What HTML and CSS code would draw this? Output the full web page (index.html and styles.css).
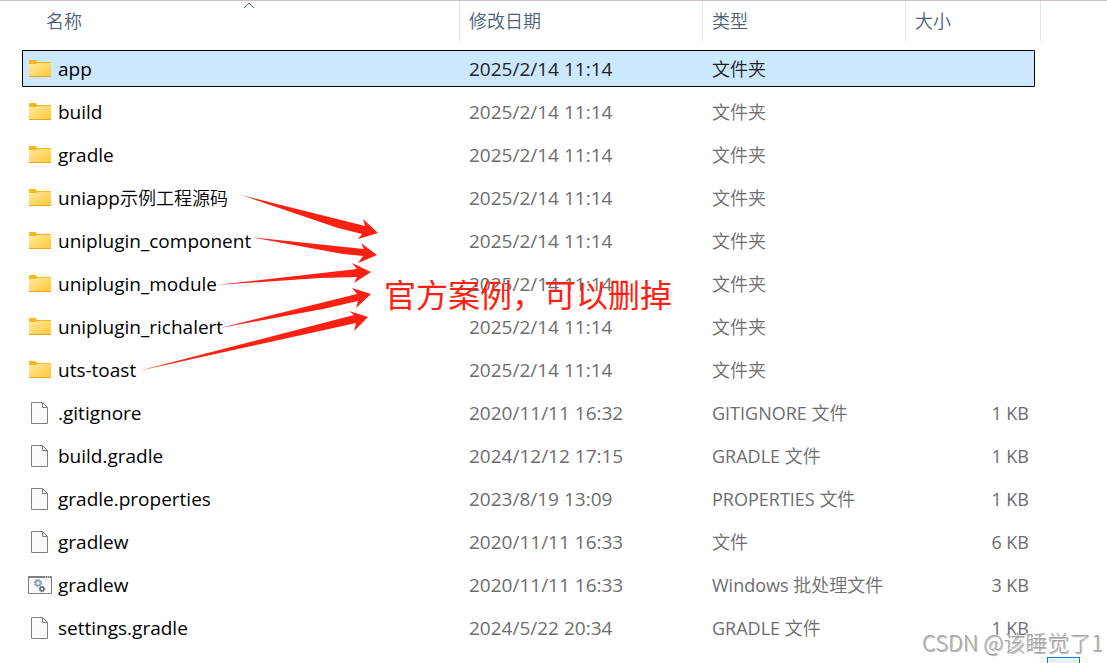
FILE: index.html
```
<!DOCTYPE html>
<html lang="zh-CN">
<head>
    <meta charset="UTF-8">
    <meta name="viewport" content="width=device-width, initial-scale=1.0">
    <title>文件夹</title>
    <link rel="stylesheet" href="styles.css">
</head>
<body>

<!-- Shared icons -->
<svg class="sprite" aria-hidden="true">
    <defs>
        <linearGradient id="folderFill" x1="0" y1="0" x2="1" y2="1">
            <stop offset="0" stop-color="#ffe8a0"/>
            <stop offset="1" stop-color="#ffc933"/>
        </linearGradient>
    </defs>
    <symbol id="folder" viewBox="0 0 24 24">
        <path d="M1 5V4q0-1 1-1h5q1 0 1.500 1l.5 1h13q1 0 1 1v2H1z" fill="#f8b81c"/>
        <path d="M1 7h7l1.500-1H23v14H1z" fill="url(#folderFill)"/>
        <path d="M1 19h22v1H1z" fill="#e8a91f"/>
    </symbol>
    <symbol id="file" viewBox="0 0 24 24">
        <path d="M3.500 1.500h11l5 5v16h-16z" fill="#fafafa" stroke="#808080"/>
        <path d="M14.500 1.500v5h5z" fill="#fff" stroke="#808080"/>
    </symbol>
    <symbol id="batch" viewBox="0 0 24 24">
        <path d="M.5 3.500h23v17H.5z" fill="#fafafa" stroke="#808080"/>
        <path d="M0 3h24v2H0z" fill="#808080"/>
        <path d="M17 4h1M19 4h1M21 4h1" stroke="#fff"/>
        <circle cx="10" cy="10" r="2.500" fill="none" stroke="#9aa7b2" stroke-width="2"/>
        <circle cx="10" cy="10" r="3.700" fill="none" stroke="#9aa7b2" stroke-width="1.200" stroke-dasharray="1.450 1.450"/>
        <circle cx="14" cy="16" r="1.900" fill="none" stroke="#5f6d78" stroke-width="1.500"/>
        <circle cx="14" cy="16" r="2.800" fill="none" stroke="#5f6d78" stroke-width="1" stroke-dasharray="1.100 1.100"/>
    </symbol>
</svg>

<main class="explorer">
    <table class="files">
        <colgroup>
            <col>
            <col class="col-date">
            <col class="col-type">
            <col class="col-size">
        </colgroup>
        <thead>
            <tr>
                <th aria-sort="ascending">
                    <button class="heading heading-name" type="button">名称
                        <svg class="sort" viewBox="0 0 12 7" aria-hidden="true"><path d="M1 6l5-5 5 5"/></svg>
                    </button>
                </th>
                <th><button class="heading" type="button">修改日期</button></th>
                <th><button class="heading" type="button">类型</button></th>
                <th><button class="heading heading-size" type="button">大小</button></th>
            </tr>
        </thead>
        <tbody>
            <tr class="selected">
                <td><div class="name"><svg class="icon"><use href="#folder"/></svg>app</div></td>
                <td class="date">2025/2/14 11:14</td><td class="zh">文件夹</td><td class="size"></td>
            </tr>
            <tr>
                <td><div class="name"><svg class="icon"><use href="#folder"/></svg>build</div></td>
                <td class="date">2025/2/14 11:14</td><td class="zh">文件夹</td><td class="size"></td>
            </tr>
            <tr>
                <td><div class="name"><svg class="icon"><use href="#folder"/></svg>gradle</div></td>
                <td class="date">2025/2/14 11:14</td><td class="zh">文件夹</td><td class="size"></td>
            </tr>
            <tr>
                <td><div class="name"><svg class="icon"><use href="#folder"/></svg>uniapp<span class="zh">示例工程源码</span></div></td>
                <td class="date">2025/2/14 11:14</td><td class="zh">文件夹</td><td class="size"></td>
            </tr>
            <tr>
                <td><div class="name"><svg class="icon"><use href="#folder"/></svg>uniplugin_component</div></td>
                <td class="date">2025/2/14 11:14</td><td class="zh">文件夹</td><td class="size"></td>
            </tr>
            <tr>
                <td><div class="name"><svg class="icon"><use href="#folder"/></svg>uniplugin_module</div></td>
                <td class="date">2025/2/14 11:14</td><td class="zh">文件夹</td><td class="size"></td>
            </tr>
            <tr>
                <td><div class="name"><svg class="icon"><use href="#folder"/></svg>uniplugin_richalert</div></td>
                <td class="date">2025/2/14 11:14</td><td class="zh">文件夹</td><td class="size"></td>
            </tr>
            <tr>
                <td><div class="name"><svg class="icon"><use href="#folder"/></svg>uts-toast</div></td>
                <td class="date">2025/2/14 11:14</td><td class="zh">文件夹</td><td class="size"></td>
            </tr>
            <tr>
                <td><div class="name"><svg class="icon"><use href="#file"/></svg>.gitignore</div></td>
                <td class="date">2020/11/11 16:32</td><td>GITIGNORE <span class="zh">文件</span></td><td class="size">1 KB</td>
            </tr>
            <tr>
                <td><div class="name"><svg class="icon"><use href="#file"/></svg>build.gradle</div></td>
                <td class="date">2024/12/12 17:15</td><td>GRADLE <span class="zh">文件</span></td><td class="size">1 KB</td>
            </tr>
            <tr>
                <td><div class="name"><svg class="icon"><use href="#file"/></svg>gradle.properties</div></td>
                <td class="date">2023/8/19 13:09</td><td>PROPERTIES <span class="zh">文件</span></td><td class="size">1 KB</td>
            </tr>
            <tr>
                <td><div class="name"><svg class="icon"><use href="#file"/></svg>gradlew</div></td>
                <td class="date">2020/11/11 16:33</td><td class="zh">文件</td><td class="size">6 KB</td>
            </tr>
            <tr>
                <td><div class="name"><svg class="icon"><use href="#batch"/></svg>gradlew</div></td>
                <td class="date">2020/11/11 16:33</td><td>Windows <span class="zh">批处理文件</span></td><td class="size">3 KB</td>
            </tr>
            <tr>
                <td><div class="name"><svg class="icon"><use href="#file"/></svg>settings.gradle</div></td>
                <td class="date">2024/5/22 20:34</td><td>GRADLE <span class="zh">文件</span></td><td class="size">1 KB</td>
            </tr>
        </tbody>
    </table>

    <!-- Red annotation on top of the list -->
    <svg class="arrows" viewBox="0 0 240 180" aria-hidden="true">
        <path d="M101 5L225 36 223 29 238 43 218 49 222 44 198 38z"/>
        <path d="M110 47L224 59 221 53 237 65 218 73 223 66 203 64z"/>
        <path d="M76 95L217 79 212 73 231 82 214 93 217 87 180 88z"/>
        <path d="M80 138L217 104 212 98 231 104 216 118 218 111 183 119z"/>
        <path d="M-2 181L214 125 209 121 228 127 214 141 216 133z"/>
    </svg>
    <div class="note">官方案例，可以删掉</div>

    <div class="view-button"></div>
    <div class="watermark">CSDN @该睡觉了1</div>
</main>

</body>
</html>
```
FILE: styles.css
```
body {
    margin: 0;
    background-color: #fff;
    color: #6d6d6d;
    font-family: "Open Sans", "Noto Sans CJK SC", sans-serif;
    font-size: 18px;
    line-height: 24px;
}

.sprite {
    position: absolute;
    width: 0;
    height: 0;
}

.explorer {
    position: relative;
    box-sizing: border-box;
    min-height: 100vh;
    padding: 0 72px 0 22px;
    border-top: 1px solid #d8c0c8;
    overflow: hidden;
}

/* File list */
.files {
    width: 100%;
    margin-top: -6px;
    table-layout: fixed;
    border-spacing: 0 6px;
}

.col-date {
    width: 243px;
}

.col-type {
    width: 203px;
}

.col-size {
    width: 129px;
}

th {
    height: 43px;
    padding: 0;
    vertical-align: top;
}

.heading {
    position: relative;
    display: block;
    box-sizing: border-box;
    width: 100%;
    height: 40px;
    padding: 0 9px;
    border: none;
    border-right: 1px solid #e5e5e5;
    background: none;
    color: #4c607a;
    font: inherit;
    font-weight: 350;
    text-align: left;
}

.heading-name {
    padding-left: 24px;
}

/* The last heading is a little wider than the rows */
.heading-size {
    width: calc(100% + 6px);
}

.sort {
    position: absolute;
    top: 1px;
    left: calc(50% + 2px);
    width: 12px;
    height: 7px;
    fill: none;
    stroke: #6d6d6d;
}

td {
    box-sizing: border-box;
    height: 37px;
    padding: 0 9px;
    white-space: nowrap;
}

td:first-child {
    padding-left: 6px;
    color: #000;
}

.name {
    display: flex;
    align-items: center;
    font-size: 19px;
}

.icon {
    width: 24px;
    height: 24px;
    margin-right: 6px;
}

.zh {
    font-size: 18px;
    font-weight: 350;
}

.date {
    font-size: 19px;
}

.size {
    padding-right: 6px;
    text-align: right;
}

.selected {
    background-color: #cce8ff;
    outline: 1px solid #000;
    outline-offset: -1px;
    border-radius: 1px;
}

.selected td {
    color: #222;
}

.selected td:first-child {
    color: #000;
}

/* Annotation */
.arrows {
    position: absolute;
    top: 189px;
    left: 140px;
    width: 240px;
    height: 180px;
    fill: #ff2012;
    overflow: visible;
}

.note {
    position: absolute;
    top: 268px;
    left: 384px;
    color: #ff2012;
    font-family: "Noto Sans CJK SC", sans-serif;
    font-size: 32px;
    line-height: 48px;
    white-space: nowrap;
}

.watermark {
    position: absolute;
    right: 4px;
    bottom: 6px;
    color: #a5a5a5;
    font-family: "Noto Sans CJK SC", sans-serif;
    font-size: 22px;
    font-weight: 300;
    line-height: 32px;
    text-shadow: -1px -1px 0 #fff, 1px 1px 1px #aaa;
}

.view-button {
    position: absolute;
    right: 27px;
    bottom: -20px;
    box-sizing: border-box;
    width: 33px;
    height: 26px;
    border: 1px solid #0078d7;
    background-color: #e5f3ff;
}
```
